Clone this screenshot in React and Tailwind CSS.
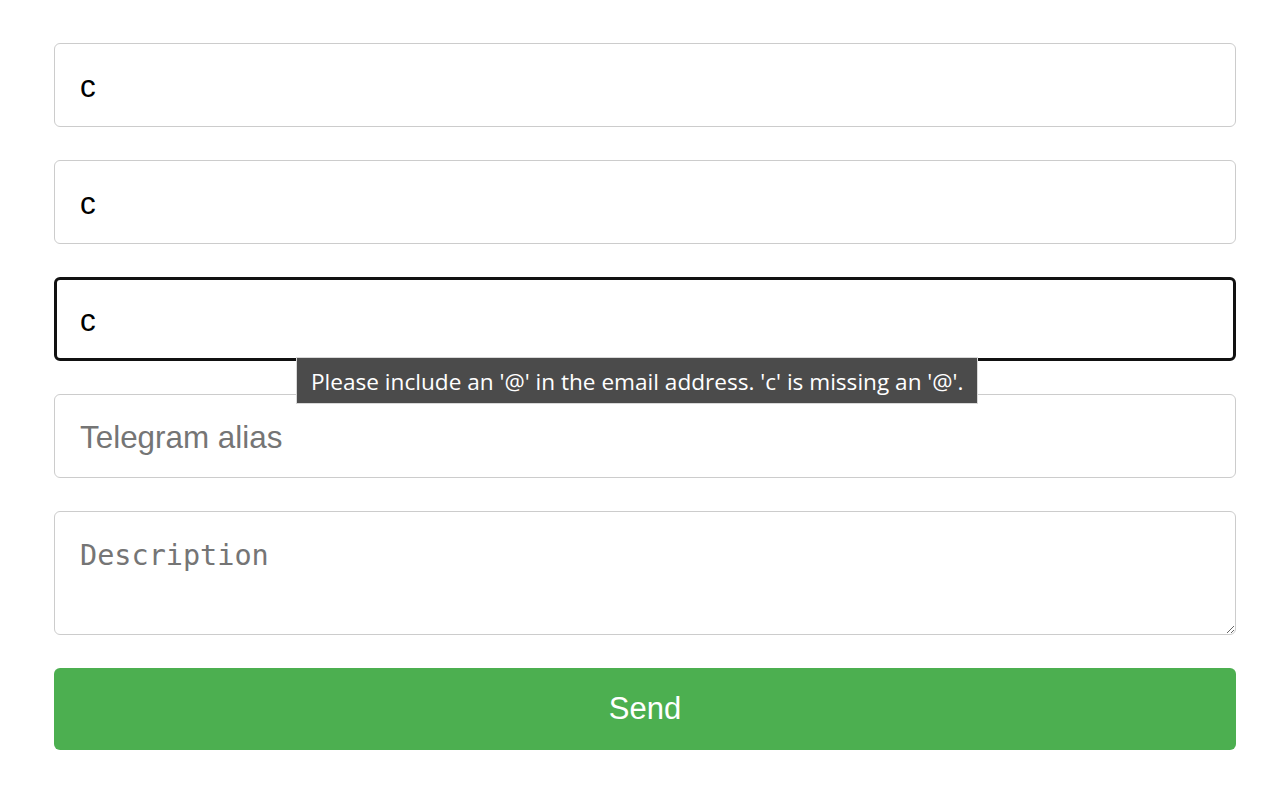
import { useState } from "react";

const inputClass =
  "w-full h-[84px] px-[25px] pt-[3px] border border-[#cccccc] rounded-[6px] bg-white font-['Liberation_Sans',Arial,sans-serif] text-[31.4px] text-black placeholder:text-[#757575] outline-none";

export default function App() {
  const [name, setName] = useState("c");
  const [phone, setPhone] = useState("c");
  const [email, setEmail] = useState("c");
  const [alias, setAlias] = useState("");
  const [description, setDescription] = useState("");

  return (
    <div
      className="min-h-[797px] bg-white pl-[54px] pr-[44px] pt-[43px] pb-[47px]"
      style={{ fontFamily: '"Liberation Sans", Arial, sans-serif' }}
    >
      <form className="flex flex-col gap-[33px]" onSubmit={(e) => e.preventDefault()}>
        <input
          type="text"
          value={name}
          onChange={(e) => setName(e.target.value)}
          className={inputClass}
        />
        <input
          type="text"
          value={phone}
          onChange={(e) => setPhone(e.target.value)}
          className={inputClass}
        />

        <div className="relative">
          <input
            type="text"
            value={email}
            onChange={(e) => setEmail(e.target.value)}
            className="w-full h-[84px] px-[23px] pt-[3px] border-[3px] border-[#111111] rounded-[6px] bg-white font-['Liberation_Sans',Arial,sans-serif] text-[31.4px] text-black outline-none"
          />
          {/* native validation bubble */}
          <div
            className="absolute left-[242px] top-[80px] z-10 h-[47px] w-[682px] flex items-center pl-[14px] pt-[2px] bg-[#4b4b4b] border border-[#d8d8d8] text-white text-[22.6px] whitespace-nowrap"
            style={{ fontFamily: '"Open Sans", "Noto Sans", sans-serif' }}
          >
            Please include an '@' in the email address. 'c' is missing an '@'.
          </div>
        </div>

        <input
          type="text"
          placeholder="Telegram alias"
          value={alias}
          onChange={(e) => setAlias(e.target.value)}
          className={inputClass}
        />

        <textarea
          placeholder="Description"
          value={description}
          onChange={(e) => setDescription(e.target.value)}
          className="w-full h-[124px] px-[25px] pt-[26px] border border-[#cccccc] rounded-[6px] bg-white text-[28.5px] leading-tight text-black placeholder:text-[#757575] outline-none"
          style={{ fontFamily: '"DejaVu Sans Mono", "Liberation Mono", monospace' }}
        ></textarea>

        <button
          type="submit"
          className="w-full h-[82px] bg-[#4caf50] text-white text-[31px] rounded-[6px]"
        >
          Send
        </button>
      </form>
    </div>
  );
}
